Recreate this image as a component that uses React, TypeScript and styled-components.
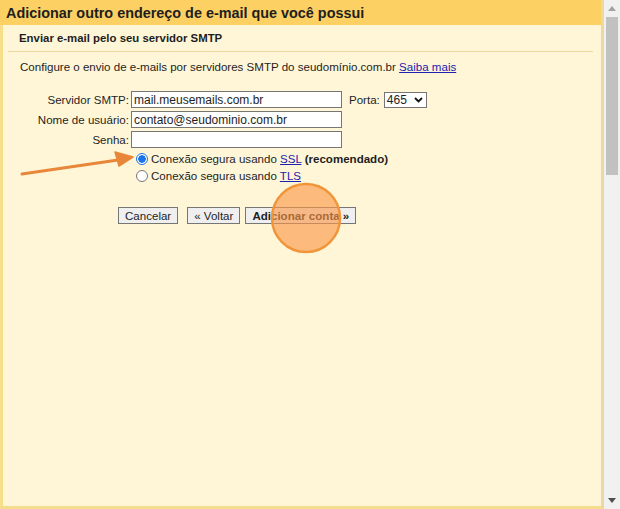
import React from "react";
import styled, { createGlobalStyle } from "styled-components";

const Global = createGlobalStyle`
  html, body { margin: 0; padding: 0; overflow: hidden; }
  body { font-family: "Liberation Sans", Arial, sans-serif; background: #f1f1f1; }
`;

const Frame = styled.div`
  position: relative;
  display: flex;
  width: 620px;
  height: 509px;
  overflow: hidden;
`;

const Panel = styled.div`
  width: 604px;
  height: 509px;
  display: flex;
  flex-direction: column;
  box-sizing: border-box;
  border-right: 3px solid #ecd9a2;
  border-bottom: 3px solid #f3dc8c;
  background: #fff6d8;
`;

const Header = styled.div`
  height: 25px;
  background: #fcd062;
  padding: 1px 0 0 6px;
  box-sizing: border-box;
  display: flex;
  align-items: center;
  font-weight: bold;
  font-size: 14.4px;
  color: #1e1e1e;
  flex: none;
`;

const Body = styled.div`
  flex: 1;
  border-left: 3px solid #f7de8a;
  display: flex;
  flex-direction: column;
`;

const SubHeader = styled.div`
  height: 26px;
  display: flex;
  align-items: center;
  font-weight: bold;
  font-size: 11.4px;
  color: #1e1e1e;
  margin: 0 8px 0 5px;
  padding-left: 11px;
  border-bottom: 1px solid #ecd9a0;
`;

const Desc = styled.div`
  margin-top: 8px;
  padding-left: 17px;
  font-size: 11.55px;
  color: #1e1e1e;
  line-height: 15px;
`;

const Link = styled.a`
  color: #2020b0;
  text-decoration: underline;
  cursor: pointer;
`;

const Form = styled.div`
  margin-top: 16px;
  display: grid;
  grid-template-columns: 126px 211px auto;
  column-gap: 2px;
  row-gap: 3px;
  align-items: center;
`;

const Label = styled.label`
  text-align: right;
  font-size: 11.55px;
  color: #1e1e1e;
`;

const Input = styled.input`
  box-sizing: border-box;
  width: 211px;
  height: 17px;
  margin: 0;
  padding: 0 2px;
  border: 1px solid #767676;
  background: #fff;
  font-family: "Liberation Sans", Arial, sans-serif;
  font-size: 12px;
  color: #1e1e1e;
  outline: none;
`;

const PortGroup = styled.div`
  display: flex;
  align-items: center;
  gap: 4px;
  margin-left: 5px;
  font-size: 11.55px;
  color: #1e1e1e;
`;

const Select = styled.div`
  box-sizing: border-box;
  width: 43px;
  height: 16px;
  border: 1px solid #767676;
  background: #fff;
  display: flex;
  align-items: center;
  justify-content: space-between;
  padding: 0 3px 0 2px;
  font-size: 12px;
`;

const Radios = styled.div`
  margin-top: 3px;
  margin-left: 133px;
  display: flex;
  flex-direction: column;
  gap: 1px;
`;

const RadioRow = styled.label`
  display: flex;
  align-items: center;
  gap: 3px;
  height: 16px;
  font-size: 11.55px;
  color: #1e1e1e;
`;

const RadioDot = styled.span<{ $on?: boolean }>`
  box-sizing: border-box;
  width: 12px;
  height: 12px;
  border-radius: 50%;
  border: 1px solid ${(p) => (p.$on ? "#1a73e8" : "#767676")};
  background: ${(p) => (p.$on ? "radial-gradient(circle, #1a73e8 0 3.5px, #fff 4px)" : "#fff")};
  flex: none;
`;

const Buttons = styled.div`
  margin-top: 23px;
  margin-left: 115px;
  display: flex;
  gap: 9px;
`;

const Button = styled.button<{ $bold?: boolean; $gap?: number }>`
  box-sizing: border-box;
  height: 17px;
  margin: 0 0 0 ${(p) => p.$gap ?? 0}px;
  padding: 0 6px;
  border: 1px solid #767676;
  border-radius: 0;
  background: #efefef;
  font-family: "Liberation Sans", Arial, sans-serif;
  font-size: 11.55px;
  font-weight: ${(p) => (p.$bold ? "bold" : "normal")};
  color: #1e1e1e;
  display: flex;
  align-items: center;
`;

const Scrollbar = styled.div`
  width: 16px;
  height: 509px;
  background: #f1f1f1;
  display: flex;
  flex-direction: column;
  align-items: center;
`;

const ArrowBtn = styled.div`
  height: 17px;
  width: 16px;
  display: flex;
  align-items: center;
  justify-content: center;
  flex: none;
`;

const Thumb = styled.div`
  width: 12px;
  height: 158px;
  background: #c1c1c1;
  flex: none;
`;

const Spacer = styled.div`
  flex: 1;
`;

const Overlay = styled.svg`
  position: absolute;
  left: 0;
  top: 0;
  pointer-events: none;
`;

export default function App() {
  return (
    <>
      <Global />
      <Frame>
        <Panel>
          <Header>Adicionar outro endereço de e-mail que você possui</Header>
          <Body>
            <SubHeader>Enviar e-mail pelo seu servidor SMTP</SubHeader>
            <Desc>
              Configure o envio de e-mails por servidores SMTP do seudomínio.com.br{" "}
              <Link>Saiba mais</Link>
            </Desc>
            <Form>
              <Label>Servidor SMTP:</Label>
              <Input defaultValue="mail.meusemails.com.br" />
              <PortGroup>
                Porta:
                <Select>
                  <span>465</span>
                  <svg width="9" height="6" viewBox="0 0 9 6">
                    <path d="M1 1 L4.5 4.5 L8 1" fill="none" stroke="#111" strokeWidth="1.8" />
                  </svg>
                </Select>
              </PortGroup>
              <Label>Nome de usuário:</Label>
              <Input defaultValue="contato@seudominio.com.br" />
              <span />
              <Label>Senha:</Label>
              <Input type="password" />
              <span />
            </Form>
            <Radios>
              <RadioRow>
                <RadioDot $on />
                <span>
                  Conexão segura usando <Link>SSL</Link> <b>(recomendado)</b>
                </span>
              </RadioRow>
              <RadioRow>
                <RadioDot />
                <span>
                  Conexão segura usando <Link>TLS</Link>
                </span>
              </RadioRow>
            </Radios>
            <Buttons>
              <Button>Cancelar</Button>
              <Button>« Voltar</Button>
              <Button $bold $gap={-4}>Adicionar conta »</Button>
            </Buttons>
          </Body>
        </Panel>
        <Scrollbar>
          <ArrowBtn>
            <svg width="8" height="5" viewBox="0 0 8 5">
              <path d="M0 5 L4 0 L8 5 Z" fill="#a3a3a3" />
            </svg>
          </ArrowBtn>
          <Thumb />
          <Spacer />
          <ArrowBtn>
            <svg width="8" height="5" viewBox="0 0 8 5">
              <path d="M0 0 L4 5 L8 0 Z" fill="#505050" />
            </svg>
          </ArrowBtn>
        </Scrollbar>
        <Overlay width="620" height="509" viewBox="0 0 620 509">
          <line x1="22" y1="174" x2="118" y2="160" stroke="#e8873a" strokeWidth="3" strokeLinecap="round" />
          <path d="M133 157 L115 152 L119 166 Z" fill="#e8873a" stroke="#e8873a" strokeWidth="1.5" strokeLinejoin="round" />
          <circle cx="306" cy="218" r="34" fill="rgba(250,150,70,0.62)" stroke="#f0953a" strokeWidth="2.5" />
        </Overlay>
      </Frame>
    </>
  );
}
